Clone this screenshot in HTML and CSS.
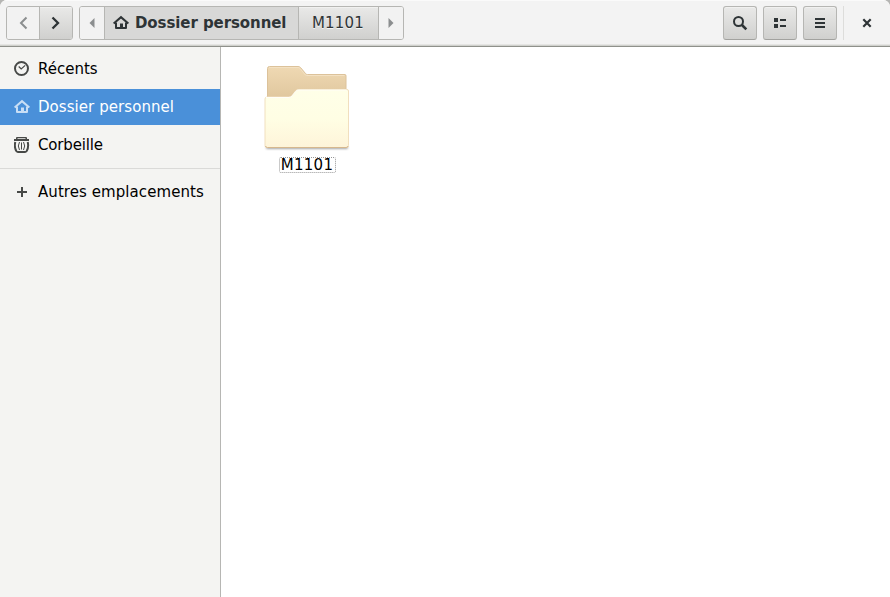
FILE: index.html
```html
<!DOCTYPE html>
<html lang="fr">
<head>
<meta charset="utf-8">
<title>Dossier personnel</title>
<link rel="stylesheet" href="styles.css">
</head>
<body>
<svg class="defs" aria-hidden="true">
  <symbol id="home" viewBox="0 0 16 16"><path d="M.6 8.500 8 2.200l7.400 6.300" fill="none" stroke="currentColor" stroke-width="2.100"/><path d="M2 7.500h2V12h3V8.500h3V12h2V7.500h2V13q0 1-1 1H3q-1 0-1-1z" fill="currentColor"/></symbol>
</svg>
<div class="window">
  <header class="header">
    <div class="group nav">
      <button class="btn flat back"><svg width="16" height="16" viewBox="0 0 16 16"><path d="M10.500 2.500 5 8l5.500 5.500" fill="none" stroke="#8b8e8f" stroke-width="2"/></svg></button>
      <button class="btn forward"><svg width="16" height="16" viewBox="0 0 16 16"><path d="M5.500 2.500 11 8l-5.500 5.500" fill="none" stroke="currentColor" stroke-width="2.300"/></svg></button>
    </div>
    <div class="group path">
      <button class="btn flat arrow"><svg width="6" height="10"><path d="M5.500 0v10L.5 5z" fill="#8b8e8f"/></svg></button>
      <button class="btn current"><svg width="16" height="16"><use href="#home"/></svg><span>Dossier personnel</span></button>
      <button class="btn child"><span>M1101</span></button>
      <button class="btn flat arrow"><svg width="6" height="10"><path d="M.5 0v10l5-5z" fill="#8b8e8f"/></svg></button>
    </div>
    <div class="tools">
      <button class="btn tool"><svg width="16" height="16" viewBox="0 0 16 16"><circle cx="6.500" cy="6.500" r="4.500" fill="none" stroke="currentColor" stroke-width="2"/><path d="m10 10 4.300 4.300" stroke="currentColor" stroke-width="2.600"/></svg></button>
      <button class="btn tool"><svg width="16" height="16" viewBox="0 0 16 16"><path d="M2 3h4v4H2zM2 9h4v4H2zM8 4h6v2H8zM8 10h6v2H8z" fill="currentColor"/></svg></button>
      <button class="btn tool"><svg width="16" height="16" viewBox="0 0 16 16"><path d="M3 3h10v2H3zM3 7h10v2H3zM3 11h10v2H3z" fill="currentColor"/></svg></button>
      <button class="close"><svg width="16" height="16" viewBox="0 0 16 16"><path d="m4.300 4.300 7.400 7.400m0-7.400-7.400 7.400" stroke="currentColor" stroke-width="2.200"/></svg></button>
    </div>
  </header>
  <div class="content">
    <nav class="sidebar">
      <a class="place"><svg width="16" height="16" viewBox="0 0 16 16"><circle cx="7.500" cy="7.500" r="6.500" fill="none" stroke="currentColor" stroke-width="2"/><path d="m4.700 5.500 2.500 2.500 4-3.600" fill="none" stroke="currentColor" stroke-width="1.200"/></svg><span>Récents</span></a>
      <a class="place selected"><svg width="16" height="16"><use href="#home"/></svg><span>Dossier personnel</span></a>
      <a class="place trash"><svg width="16" height="16" viewBox="0 0 16 16"><path d="M0 2h2V1q0-1 1-1h9q1 0 1 1v1h2v2H0zM3.500 1.200V2h8v-.8z" fill="currentColor" fill-rule="evenodd"/><path d="M1.300 5Q0 10 2.300 14q.7 1 1.700 1h7q1 0 1.700-1Q15 10 13.700 5" fill="none" stroke="currentColor" stroke-width="2"/><path d="M5.500 5q-2.400 4 0 8M7.500 5.500v7M9.500 5q2.400 4 0 8" fill="none" stroke="currentColor"/></svg><span>Corbeille</span></a>
      <hr class="divider">
      <a class="place other"><svg width="16" height="16" viewBox="0 0 16 16"><path d="M7 3h2v4h4v2H9v4H7V9H3V7h4z" fill="currentColor"/></svg><span>Autres emplacements</span></a>
    </nav>
    <main class="files">
      <div class="file">
        <svg class="folder" width="96" height="95" viewBox="0 0 96 95">
          <defs>
            <linearGradient id="back" x1="0" y1="0" x2="0" y2="1"><stop offset="0" stop-color="#efd9b3"/><stop offset=".4" stop-color="#e0c79e"/></linearGradient>
            <linearGradient id="front" x1="0" y1="0" x2="0" y2="1"><stop offset="0" stop-color="#ffffe8"/><stop offset=".5" stop-color="#fffee4"/><stop offset="1" stop-color="#fef4d9"/></linearGradient>
            <filter id="soft" x="-10%" width="120%" y="-100%" height="300%"><feGaussianBlur stdDeviation="1"/></filter>
          </defs>
          <rect x="7" y="86" width="82" height="3" rx="1.500" fill="#777" opacity=".65" filter="url(#soft)"/>
          <path d="M8.500 85V8.500q0-2 2-2h28.500q1.500 0 2.500 1l5 6q.8 1 2 1H86q1 0 1 1.500V85z" fill="url(#back)" stroke="#dcc29a"/>
          <path d="M10 7.500h29q1 0 2 1l4.500 5.500q1 1.500 2 1.500h38" fill="none" stroke="#f3e1c3"/>
          <path d="M6 85.500V39q0-2 2-2h22q2 0 3.500-2l3-4q1-1.500 3-1.500H88q1.500 0 1.500 1.500v54.500q0 2-2 2H8q-2 0-2-2z" fill="url(#front)" stroke="#f1dfbe"/>
          <path d="M7 37.500h23q2 0 3.500-2l3-4q1-1.500 3-1.500h48" fill="none" stroke="#fffef8"/>
          <path d="M6.500 86q.3 1.500 2 1.500h78.500q2 0 2-1.500" fill="none" stroke="#d6b88e"/>
        </svg>
        <span class="label">M1101</span>
      </div>
    </main>
  </div>
</div>
</body>
</html>
```

FILE: styles.css
```css
* { box-sizing: border-box; }
html { background: #b5b5b3; }
body { margin: 0; font: 15px/18px "DejaVu Sans", sans-serif; color: #000; overflow: hidden; }
.defs { position: absolute; width: 0; height: 0; }
.window { width: 890px; height: 597px; display: flex; flex-direction: column; border-radius: 7px 7px 0 0; overflow: hidden; background: #fff; }
.header { height: 47px; flex: none; display: flex; gap: 6px; padding: 6px 6px 0; border-bottom: 1px solid #8f918b; background: linear-gradient(#fafafa 0 1px, #f3f3f3 1px 44px, #e5e5e3 44px 45px, #d0d1cd 45px); color: #2e3436; }
.group { display: flex; height: 34px; border: 1px solid #b6b6b3; border-radius: 3px; overflow: hidden; }
button { font: inherit; color: inherit; border: 0; padding: 0; margin: 0; }
svg { flex: none; display: block; }
.btn { display: flex; align-items: center; justify-content: center; background: linear-gradient(#e9e9e8, #d0d0ce); box-shadow: inset 0 1px #f1f1f0; text-shadow: 0 1px rgba(255, 255, 255, .75); }
.btn + .btn { border-left: 1px solid #b6b6b3; }
.nav { width: 67px; }
.nav .btn { width: 32px; }
.nav .btn + .btn { width: 33px; }
.nav .back { padding-left: 2px; }
.nav .forward { padding-right: 2px; }
.btn.flat { background: #f2f2f2; box-shadow: none; }
.path { width: 325px; }
.path .arrow { width: 24px; }
.path .arrow:last-child { width: 25px; }
.path .current { width: 194px; gap: 6px; justify-content: flex-start; padding-left: 8px; background: #d8d8d7; box-shadow: none; font-weight: bold; text-shadow: none; letter-spacing: -.08px; }
.path .child { width: 80px; padding-right: 1px; letter-spacing: .2px; }
.path span { margin-top: -1px; }
.tools { margin-left: auto; display: flex; gap: 6px; }
.btn.tool { width: 34px; height: 34px; border: 1px solid #b6b6b3; border-bottom-color: #a2a29f; border-radius: 3px; }
.close { width: 41px; height: 34px; padding-left: 6px; background: none; border-left: 1px solid #dddddb; display: flex; align-items: center; justify-content: center; }
.content { flex: 1; display: flex; min-height: 0; }
.sidebar { width: 221px; flex: none; display: flex; flex-direction: column; gap: 2px; padding-top: 4px; background: #f4f4f2; border-right: 1px solid #b6b6b3; }
.place { display: flex; align-items: center; gap: 8px; height: 36px; padding-left: 14px; }
.place svg { color: #474947; }
.place span { margin-top: -1px; }
.place.selected { background: #4a90d9; color: #fff; letter-spacing: .06px; }
.place.trash { letter-spacing: -.15px; }
.place.other { letter-spacing: .07px; }
.place.selected svg { color: #c8def5; }
.divider { width: 100%; height: 1px; margin: 3px 0 0; border: 0; background: #dadad8; }
.divider + .place { margin-top: 3px; }
.files { flex: 1; padding: 13px 0 0 38px; }
.file { width: 96px; display: flex; flex-direction: column; align-items: center; }
.label { width: 57px; height: 16px; margin-top: 2px; border: 1px dotted #969696; border-radius: 2px; line-height: 15px; letter-spacing: .25px; text-align: center; }
```
